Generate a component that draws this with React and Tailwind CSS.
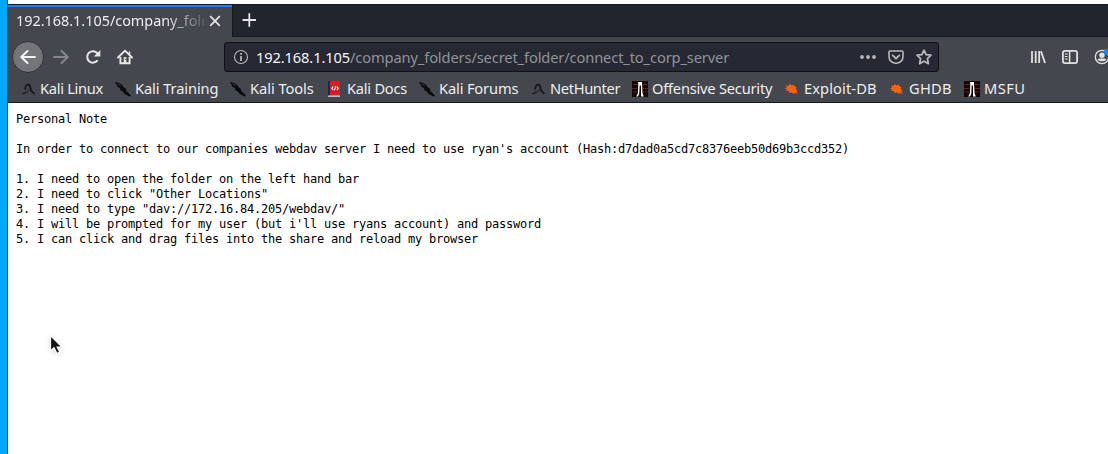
import React from "react";

const uiFont = "font-['Noto_Sans','Open_Sans',sans-serif]";

function KaliDragon() {
  return (
    <svg width="16" height="16" viewBox="0 0 16 16" className="shrink-0" fill="none" stroke="#17181b">
      <path d="M5 8.500C5.500 5.500 6.500 3.600 8.200 3.700C11.300 4 9.800 7.500 11.200 9.500C12 11 13.500 11.500 14.500 13" strokeWidth="1.800" />
      <path d="M9.500 8.500C8.500 11.500 5 12.800 2 12.700C4 12.200 5.500 11.500 6 10" strokeWidth=".9" />
    </svg>
  );
}

function Dagger() {
  return (
    <svg width="16" height="16" viewBox="0 0 16 16" className="shrink-0" fill="#08090a">
      <path d="M0 1L3.500 1.800L7.200 4L8.200 6L10.500 7.600L11.500 10.300L16 14.300L15 15.700L9.500 12.700L7.500 10.300L5.600 9.500L5 7.300L2.500 5.500Z" />
      <path d="M2.500 2.800L6 5" stroke="#55585e" strokeWidth=".7" />
    </svg>
  );
}

function DocsBook() {
  return (
    <svg width="16" height="16" viewBox="0 0 16 16" className="shrink-0">
      <path fill="#18295a" d="M1 0h3v15H1z" />
      <path fill="#db1d20" d="M3 0h10v15H3z" />
      <path fill="#d9d9d9" d="M1 14.500h12v1.300H1z" />
      <path d="M6.200 5.500L4.800 7.300L6.300 8.800M7.400 9.300L8.700 5.200M9.800 5.500L11.300 7.300L9.900 9" fill="none" stroke="#fff" strokeWidth="1.100" />
    </svg>
  );
}

function Offsec() {
  return (
    <svg width="16" height="16" viewBox="0 0 16 16" className="shrink-0">
      <path fill="#180607" d="M0 0h16v16H0z" />
      <path d="M1 3.500h5M0 7.500h5M1 11h4M11 3.500h4M11 7.500h5M11 11h4" stroke="#542525" strokeWidth="1.200" />
      <path d="M6 1H10L10.500 12L11.800 15.500H9V4.500H7.700L7.200 13L6 15.500H4.300L5.900 12L6.300 3Z" fill="#fff" />
    </svg>
  );
}

function Bug() {
  return (
    <svg width="16" height="16" viewBox="0 0 16 16" className="shrink-0" fill="#f26411">
      <path d="M.5 7.300L3 6.800L2 4.300L4.500 5L5.500 3L7.500 4.200L10 3.800L10.500 5.400L12.500 6L11.700 7.800L13.800 10L12.200 10.400L14 13.200L11.300 12L9.500 12.900L8 11.500L5.200 12L5 10L2 10L3.300 8.500Z" />
    </svg>
  );
}

const bookmarks = [
  { label: "Kali Linux", Icon: KaliDragon, width: "w-[95px]", tracking: "tracking-[-0.3px]" },
  { label: "Kali Training", Icon: Dagger, width: "w-[115px]", tracking: "tracking-[-0.1px]" },
  { label: "Kali Tools", Icon: Dagger, width: "w-[97px]", tracking: "tracking-[-0.05px]" },
  { label: "Kali Docs", Icon: DocsBook, width: "w-[92px]", tracking: "tracking-[-0.25px]" },
  { label: "Kali Forums", Icon: Dagger, width: "w-[111px]", tracking: "tracking-[-0.15px]" },
  { label: "NetHunter", Icon: KaliDragon, width: "w-[102px]", tracking: "tracking-[-0.35px]" },
  { label: "Offensive Security", Icon: Offsec, width: "w-[152px]", tracking: "tracking-[-0.22px]" },
  { label: "Exploit-DB", Icon: Bug, width: "w-[105px]", tracking: "tracking-[0.1px]" },
  { label: "GHDB", Icon: Bug, width: "w-[75px]", tracking: "tracking-[0.25px]" },
  { label: "MSFU", Icon: Offsec, width: "w-[70px]", tracking: "tracking-[0.4px]" },
];

const note = `Personal Note

In order to connect to our companies webdav server I need to use ryan's account (Hash:d7dad0a5cd7c8376eeb50d69b3ccd352)

1. I need to open the folder on the left hand bar
2. I need to click "Other Locations"
3. I need to type "dav://172.16.84.205/webdav/"
4. I will be prompted for my user (but i'll use ryans account) and password
5. I can click and drag files into the share and reload my browser`;

function TabStrip() {
  return (
    <div className="flex h-[33px] shrink-0 border-t border-[#17181c] bg-[#23252e]">
      <div className="flex w-[224px] items-center border-t-2 border-[#2878ef] bg-[#44474e] pl-2 text-[#eeeeef]">
        <div className="w-[188px] overflow-hidden whitespace-nowrap pb-[3px] text-[14.400px] leading-5 [mask-image:linear-gradient(to_right,black_148px,transparent_194px)]">
          192.168.1.105/company_folders
        </div>
        <svg width="16" height="16" viewBox="0 0 16 16" className="mb-[2px] ml-[3px]" fill="none" stroke="#e4e4e5" strokeWidth="1.700">
          <path d="M3.200 3.200L12.800 12.800M12.800 3.200L3.200 12.800" />
        </svg>
      </div>
      <div className="flex flex-1 items-center border-b border-l border-[#191a1f] pb-[2px] pl-2">
        <svg width="16" height="16" viewBox="0 0 16 16" fill="none" stroke="#e4e4e5" strokeWidth="1.800">
          <path d="M1.500 8H15M8.300 1.200V14.800" />
        </svg>
      </div>
    </div>
  );
}

function Toolbar() {
  return (
    <div className="flex h-[40px] shrink-0 items-center bg-[#44474e] pl-1">
      <div className="flex size-8 shrink-0 items-center justify-center rounded-full border border-[#303237] bg-[#737579]">
        <svg width="16" height="16" viewBox="0 0 16 16" fill="none" stroke="#f2f2f2" strokeWidth="2" strokeLinecap="round" strokeLinejoin="round">
          <path d="M15 8H1.500M7.500 2L1.300 8L7.500 14" />
        </svg>
      </div>
      <svg className="ml-[9px] shrink-0" width="16" height="16" viewBox="0 0 16 16" fill="none" stroke="#85878b" strokeWidth="2" strokeLinecap="round" strokeLinejoin="round">
        <path d="M1 8H14.500M8.500 2L14.700 8L8.500 14" />
      </svg>
      <svg className="ml-4 shrink-0" width="16" height="16" viewBox="0 0 16 16" fill="none" stroke="#e7e7e7" strokeWidth="2">
        <path d="M12.600 11.200A5.700 5.700 0 1 1 12.700 4.800" />
        <path d="M15.300 1V7.500H8.800Z" fill="#e7e7e7" stroke="none" />
      </svg>
      <svg className="ml-4 shrink-0" width="16" height="16" viewBox="0 0 16 16" fill="none" stroke="#e7e7e7">
        <path d="M1 8.500L8 1.600L15 8.500" strokeWidth="1.900" strokeLinecap="round" strokeLinejoin="round" />
        <path d="M3.400 8V14.300H12.600V8" strokeWidth="1.900" />
        <path d="M12.500 2.500V5" strokeWidth="1.500" />
        <path d="M6.700 8.200H9.300V14H6.700Z" fill="#e7e7e7" stroke="none" />
        <path d="M7.900 10.500H9" stroke="#44474e" />
      </svg>
      <div className="ml-[91px] flex h-[30px] w-[715px] shrink-0 items-center rounded-[3px] border border-[#101116] bg-[#262833] pl-2">
        <svg width="16" height="16" viewBox="0 0 16 16" className="shrink-0" fill="none" stroke="#b4b5b8">
          <circle cx="8" cy="8" r="6.500" strokeWidth="1.100" />
          <path d="M8 7V12M8 4V5.700" strokeWidth="1.800" />
        </svg>
        <div className="ml-[7px] shrink-0 whitespace-nowrap text-[14.670px] leading-6 tracking-[-0.125px] text-[#929499]">
          <span className="text-[#f5f5f6]">192.168.1.105</span>/company_folders/secret_folder/connect_to_corp_server
        </div>
        <div className="ml-auto flex items-center gap-3 pr-[6px] text-[#b7b8bb]">
          <svg width="16" height="16" viewBox="0 0 16 16" fill="currentColor">
            <circle cx="2" cy="8" r="1.900" /><circle cx="8" cy="8" r="1.900" /><circle cx="14" cy="8" r="1.900" />
          </svg>
          <svg width="16" height="16" viewBox="0 0 16 16" fill="none" stroke="currentColor" strokeWidth="1.800" strokeLinecap="round" strokeLinejoin="round">
            <path d="M2 2H14Q15 2 15 3V7.500C15 11.500 12 14.200 8 14.200S1 11.500 1 7.500V3Q1 2 2 2Z" strokeWidth="1.600" />
            <path d="M4.700 6.300L8 9.500L11.300 6.300" />
          </svg>
          <svg width="16" height="16" viewBox="0 0 16 16" fill="none" stroke="currentColor" strokeWidth="1.800" strokeLinejoin="round">
            <path d="M8 1.200L10.100 5.700L15 6.200L11.400 9.600L12.400 14.600L8 12.200L3.600 14.600L4.600 9.600L1 6.200L5.900 5.700Z" />
          </svg>
        </div>
      </div>
      <svg className="ml-[91px] shrink-0" width="16" height="16" viewBox="0 0 16 16" fill="none" stroke="#e2e2e3" strokeWidth="2">
        <path d="M2 2V14M5.700 2V14M9.200 2V14M11 2.300L15 14" strokeWidth="1.800" />
      </svg>
      <svg className="ml-4 shrink-0" width="16" height="16" viewBox="0 0 16 16" fill="none" stroke="#e2e2e3">
        <rect x=".9" y="1.900" width="14.200" height="12.200" rx="2" strokeWidth="1.800" />
        <path d="M7.600 2V14" strokeWidth="1.500" />
        <path d="M2.800 5H5.600M2.800 7.500H5.600M2.800 10H5.600" strokeWidth="1" />
      </svg>
      <svg className="ml-4 shrink-0" width="16" height="16" viewBox="0 0 16 16" fill="none">
        <circle cx="8" cy="8" r="6.700" stroke="#e2e2e3" strokeWidth="1.300" />
        <circle cx="8" cy="6.200" r="2.700" fill="#e2e2e3" />
        <path d="M3.500 10.300C5 9.200 6 9.500 8 9.500S11 9.200 12.500 10.300C11.500 13 4.500 13 3.500 10.300Z" fill="#e2e2e3" />
        <circle cx="13.500" cy="2.800" r="3.500" fill="#1688f5" />
      </svg>
    </div>
  );
}

function Bookmarks() {
  return (
    <div className="flex h-[26px] shrink-0 border-b border-[#15161a] bg-[#44474e] pb-px pl-3">
      {bookmarks.map(({ label, Icon, width, tracking }) => (
        <div key={label} className={`flex shrink-0 items-center gap-1 ${width}`}>
          <Icon />
          <span className={`whitespace-nowrap pb-[3px] text-[14.670px] leading-5 text-[#eeeeef] ${tracking}`}>{label}</span>
        </div>
      ))}
    </div>
  );
}

export default function App() {
  return (
    <div className="relative flex h-[454px] w-[1108px] overflow-hidden bg-white">
      <div className="w-2 shrink-0 border-r border-[#075985] bg-[#02a9fa]" />
      <div className={`flex min-w-0 flex-1 flex-col overflow-hidden pt-1 ${uiFont}`}>
        <TabStrip />
        <Toolbar />
        <Bookmarks />
        <pre className="pl-2 pt-[9px] font-['DejaVu_Sans_Mono',monospace] text-[12px] leading-[15px] tracking-[-0.224px] text-black">
          {note}
        </pre>
      </div>
      <svg className="absolute left-[49px] top-[334px] drop-shadow-sm" width="16" height="22" viewBox="0 0 16 22">
        <path d="M1.500 1.500V17L5 13.700L8 19.500L10.700 18L8.200 13H13Z" fill="#151515" stroke="#fff" strokeWidth="1.200" />
      </svg>
    </div>
  );
}
